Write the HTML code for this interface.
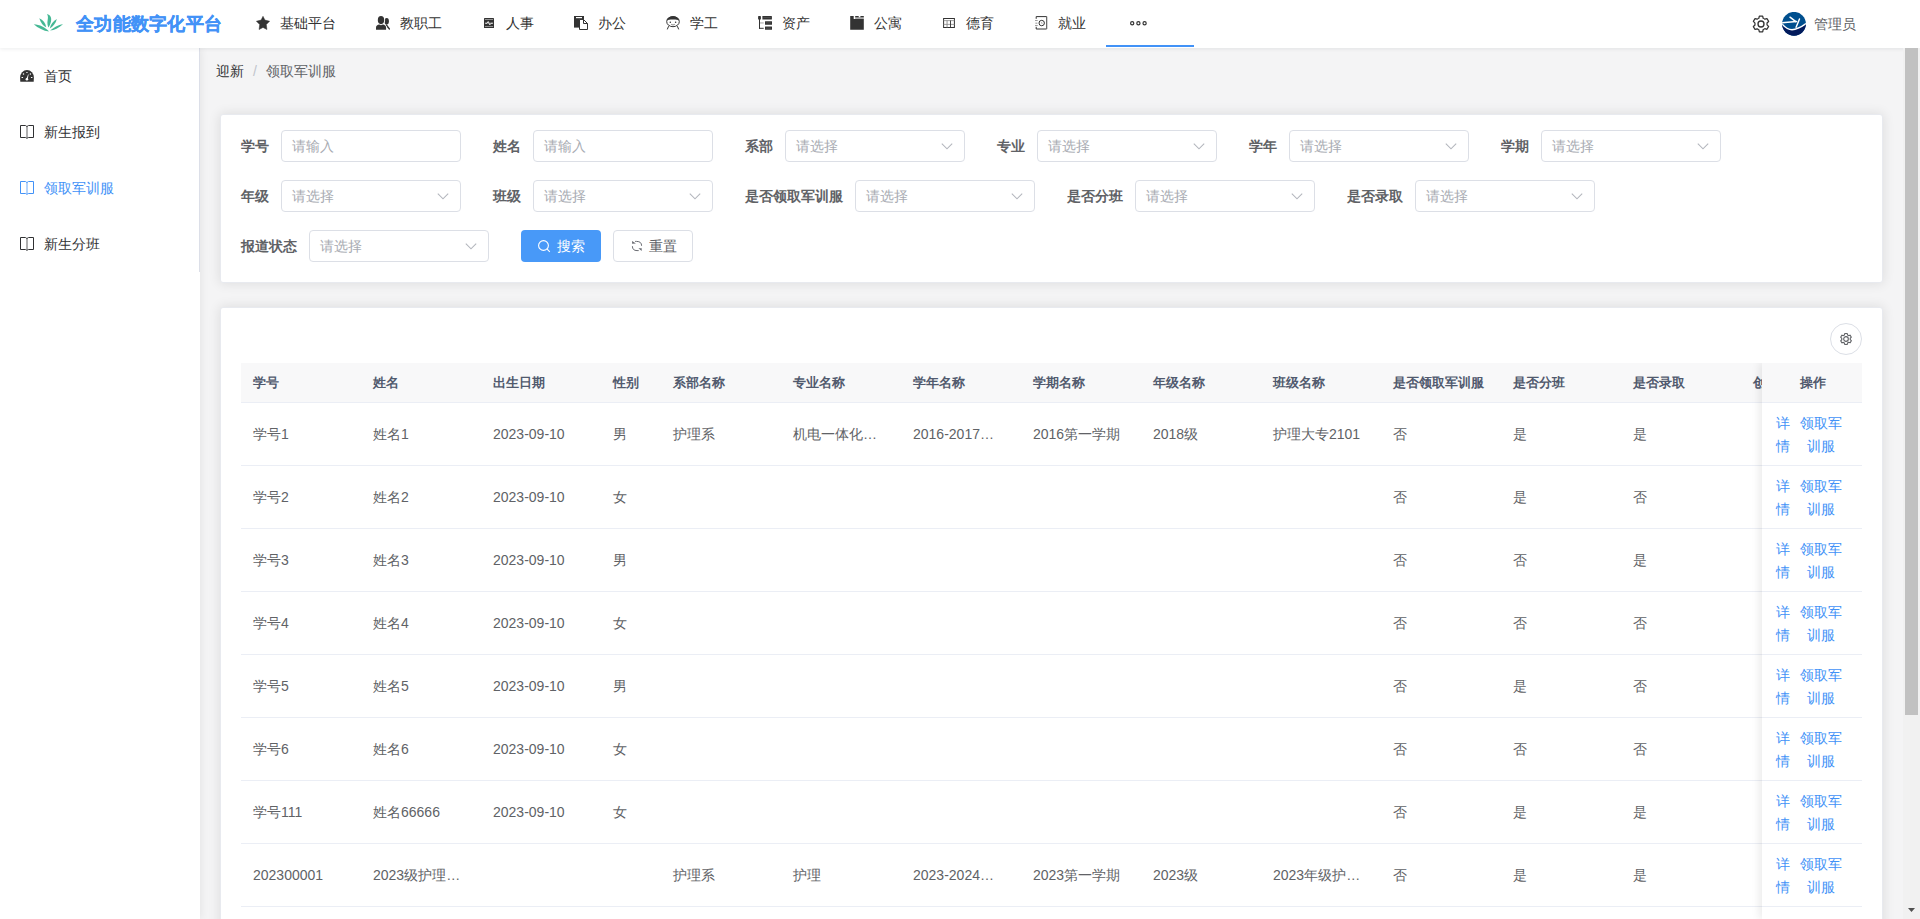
<!DOCTYPE html><html><head><meta charset="utf-8"><style>
*{box-sizing:border-box;margin:0;padding:0}
html,body{width:1920px;height:919px;overflow:hidden;background:#f4f4f5;font-family:"Liberation Sans",sans-serif;font-size:14px;color:#606266}
.abs{position:absolute}
#hdr{position:absolute;left:0;top:0;width:1920px;height:48px;background:#fff;box-shadow:0 1px 4px rgba(0,21,41,.08);z-index:5}
.ttl{position:absolute;left:76px;top:12px;font-size:18px;font-weight:900;color:#4292f7;line-height:24px;white-space:nowrap;letter-spacing:0.25px;-webkit-text-stroke:0.3px #4292f7}
.nt{position:absolute;top:-1px;line-height:48px;color:#333;white-space:nowrap}
#side{position:absolute;left:0;top:48px;width:200px;height:871px;background:#fff;z-index:2;box-shadow:1px 0 8px rgba(0,0,0,.07)}
#side .menu{position:absolute;left:0;top:0;width:200px;height:224px;border-right:1px solid #dcdfe8}
.mi{position:absolute;left:0;width:199px;height:56px;line-height:56px;color:#303133}
.mi span{position:absolute;left:44px;top:0}
.mi svg{position:absolute;left:20px;top:21px}
#sb{position:absolute;left:1903px;top:48px;width:17px;height:871px;background:#f1f1f1;z-index:6}
#thumb{position:absolute;left:2px;top:0;width:13px;height:667px;background:#c1c1c1}
.card{position:absolute;background:#fff;border-radius:3px;border:1px solid #e8eaef;box-shadow:0 0 12px 1px rgba(0,0,0,.09)}
.lbl{position:absolute;font-weight:bold;color:#606266;line-height:32px;white-space:nowrap}
.inp{position:absolute;width:180px;height:32px;border:1px solid #dcdfe6;border-radius:4px;background:#fff}
.inp span{position:absolute;left:10px;top:0;line-height:30px;color:#a8abb2;white-space:nowrap}
.inp svg{position:absolute;left:155px;top:11px}
.th{position:absolute;top:0;height:40px;line-height:40px;font-size:13px;font-weight:bold;color:#515a6e;white-space:nowrap}
.td{position:absolute;line-height:62px;white-space:nowrap;color:#606266}
.rl{position:absolute;left:0;width:1621px;height:1px;background:#ebeef5}
.op{position:absolute;color:#4292f7;line-height:23px;white-space:nowrap}
</style></head><body>
<div id="hdr">
<svg class="abs" style="left:33px;top:13px" width="31" height="20" viewBox="0 0 31 20"><g fill="#45b894">
<path d="M14 1.1 C17.5 2 18.8 5 18 8.5 C17.4 11 16.4 13 15.6 14.6 C14.6 13 14.1 10 14.6 7.5 C15.1 5 15.2 3 14 1.1Z"/>
<path d="M6.3 5.2 C10 6.8 12.6 10 13.2 14.3 C10.2 13 7.5 9.5 6.3 5.2Z"/>
<path d="M23.9 6 C20.2 8 17.6 11.5 16.8 15.5 C20.2 13.6 22.8 10 23.9 6Z"/>
<path d="M0.8 11.3 C6.5 11.5 12.5 14.5 16 18.6 C10.5 17.8 5 15.3 0.8 11.3Z"/>
<path d="M30 11.2 C25.5 15 21.5 17.2 17.1 17.6 C20.5 14.6 25.2 11.6 30 11.2Z"/>
</g></svg>
<div class="ttl">全功能数字化平台</div>
<svg class="abs" style="left:256px;top:16px" width="14" height="14" viewBox="0 0 14 14"><path fill="#333" stroke="#333" stroke-width="0.5" stroke-linejoin="round" d="M7 0.3 L8.9 4.1 L13.6 5.2 L10.3 8.5 L10.9 13.5 L7 11.4 L3.1 13.5 L3.7 8.5 L0.4 5.2 L5.1 4.1Z"/></svg>
<svg class="abs" style="left:376px;top:16px" width="14" height="14" viewBox="0 0 14 14"><g fill="#333"><ellipse cx="10.7" cy="5.2" rx="2.2" ry="3.2"/></g><path d="M10.3 9 L13.3 12.9" stroke="#333" stroke-width="1.5" stroke-linecap="round"/><ellipse cx="5" cy="4.1" rx="4.1" ry="5" fill="#fff"/><path d="M-0.5 14 V12 C-0.5 9.3 2 7.8 5 7.8 C8 7.8 11.1 9.3 11.1 12 V14Z" fill="#fff"/><g fill="#333"><ellipse cx="5" cy="4.1" rx="3.2" ry="4.1"/><path d="M0 13.8 V11.8 C0 9.8 1.5 8.7 3.3 8.6 L5 9.3 L6.8 8.6 C8.6 8.7 10.1 9.8 10.1 11.8 V13.8Z"/></g></svg>
<svg class="abs" style="left:484px;top:18px" width="10" height="10" viewBox="0 0 10 10"><rect x="0" y="0" width="10" height="10.2" rx="0.6" fill="#333"/><rect x="0.9" y="1.1" width="8.2" height="0.7" fill="#bbb"/><rect x="0.9" y="8.3" width="8.2" height="0.7" fill="#bbb"/><rect x="0.9" y="4.6" width="8.2" height="1" fill="#888"/><path d="M1.3 5.3 L3 5.3 L4.2 3.5 L5.8 6.9 L6.9 5.3 L8.8 5.3" stroke="#f4f4f4" stroke-width="0.9" fill="none"/></svg>
<svg class="abs" style="left:574px;top:16px" width="14" height="14" viewBox="0 0 14 14"><path fill="#333" d="M0 0 H10 V11.6 H0Z"/><rect x="2" y="1" width="6" height="1.2" fill="#fff"/><path d="M5.5 3.5 H9.5 L13.5 7.5 V13.5 H5.5Z" fill="#fff" stroke="#333" stroke-width="1"/><path d="M9.5 3.5 V7.5 H13.5" fill="none" stroke="#333" stroke-width="1"/></svg>
<svg class="abs" style="left:666px;top:16px" width="14" height="14" viewBox="0 0 14 14"><g fill="none" stroke="#333" stroke-width="1"><ellipse cx="7" cy="5.6" rx="6.3" ry="5.1"/><path d="M2.6 10.2 L1.3 13.4 M11.4 10.2 L12.7 13.4"/><path d="M5.2 8.3 Q7 9.8 8.8 8.3" stroke="#888"/></g><path d="M0.9 4.6 C1.2 1.6 3.6 0.5 7 0.5 C10.4 0.5 12.8 1.6 13.1 4.6 C12 3.6 10 3.4 7 3.4 C4 3.4 2 3.6 0.9 4.6Z" fill="#333"/><circle cx="4.3" cy="6.3" r="0.75" fill="#333"/><circle cx="9.6" cy="6.3" r="0.75" fill="#333"/></svg>
<svg class="abs" style="left:758px;top:16px" width="14" height="14" viewBox="0 0 14 14"><g fill="#333"><rect x="0.1" y="0.1" width="2.8" height="3.4" rx="0.6"/><rect x="1" y="3" width="1" height="9.8"/><rect x="1" y="11.8" width="4.7" height="1"/><rect x="4.4" y="0.1" width="9.5" height="3.4" rx="0.3"/><rect x="7" y="5.3" width="7" height="3.4" rx="0.3"/><rect x="7" y="10.4" width="7" height="3.4" rx="0.3"/></g><rect x="2" y="6.5" width="3.7" height="0.9" fill="#999"/><rect x="5.4" y="1.5" width="7.5" height="0.5" fill="#666"/><rect x="8" y="6.7" width="5" height="0.5" fill="#666"/><rect x="8" y="11.8" width="5" height="0.5" fill="#666"/></svg>
<svg class="abs" style="left:850px;top:16px" width="14" height="14" viewBox="0 0 14 14"><rect x="5.2" y="1.1" width="8.6" height="2.2" fill="#a8a8a8"/><path fill="#333" d="M0.2 0.1 H3.7 V3.1 H13.8 V13.8 H0.2Z"/><path fill="#333" d="M5.2 0.1 H8.7 V1.2 H5.2Z M10.4 0.1 H13.8 V1.2 H10.4Z"/></svg>
<svg class="abs" style="left:943px;top:18px" width="12" height="10" viewBox="0 0 12 10"><rect x="0.6" y="0.5" width="10.8" height="9" fill="none" stroke="#333" stroke-width="1"/><rect x="0.6" y="2.3" width="10.8" height="0.8" fill="#888"/><rect x="0.6" y="5.9" width="10.8" height="0.8" fill="#888"/><rect x="3.6" y="2.5" width="0.9" height="7" fill="#888"/><rect x="7" y="2.5" width="0.9" height="7" fill="#333"/></svg>
<svg class="abs" style="left:1035px;top:16px" width="13" height="14" viewBox="0 0 13 14"><path d="M1.2 2.8 V0.6 H11.6 V13 H1.2 V10.8" fill="none" stroke="#333" stroke-width="1"/><rect x="11.2" y="0.6" width="1" height="12.4" fill="#777"/><circle cx="6.7" cy="7.05" r="2.7" fill="none" stroke="#333" stroke-width="1"/><g fill="#888"><rect x="0" y="4" width="2.7" height="0.8"/><rect x="0.4" y="6.7" width="2" height="0.9"/><rect x="0" y="9.1" width="2.7" height="0.8"/><path d="M6.3 5.8 L7.9 7.4 L6.3 7.4Z"/></g></svg>
<div class="nt" style="left:280px">基础平台</div>
<div class="nt" style="left:400px">教职工</div>
<div class="nt" style="left:506px">人事</div>
<div class="nt" style="left:598px">办公</div>
<div class="nt" style="left:690px">学工</div>
<div class="nt" style="left:782px">资产</div>
<div class="nt" style="left:874px">公寓</div>
<div class="nt" style="left:966px">德育</div>
<div class="nt" style="left:1058px">就业</div>
<svg class="abs" style="left:1130px;top:21px" width="17" height="5" viewBox="0 0 17 5"><g fill="none" stroke="#333" stroke-width="1.2"><circle cx="2.2" cy="2.3" r="1.6"/><circle cx="8.4" cy="2.3" r="1.6"/><circle cx="14.6" cy="2.3" r="1.6"/></g></svg>
<div class="abs" style="left:1106px;top:45px;width:88px;height:2px;background:#4292f7"></div>
<svg class="abs" style="left:1751px;top:14px" width="20" height="20" viewBox="0 0 24 24"><path fill="none" stroke="#333" stroke-width="1.5" stroke-linejoin="round" d="M10 2.5 h4 l0.6 2.6 a7.5 7.5 0 0 1 2 1.15 l2.55-0.8 2 3.46 -1.95 1.84 a7.5 7.5 0 0 1 0 2.3 l1.95 1.84 -2 3.46 -2.55-0.8 a7.5 7.5 0 0 1 -2 1.15 L14 21.5 h-4 l-0.6-2.6 a7.5 7.5 0 0 1 -2-1.15 l-2.55 0.8 -2-3.46 1.95-1.84 a7.5 7.5 0 0 1 0-2.3 L2.85 8.91 l2-3.46 2.55 0.8 a7.5 7.5 0 0 1 2-1.15Z"/><circle cx="12" cy="12" r="3.6" fill="none" stroke="#333" stroke-width="1.6"/></svg>
<svg class="abs" style="left:1782px;top:12px" width="24" height="24" viewBox="0 0 24 24"><defs><clipPath id="cc"><circle cx="12" cy="11.8" r="11.9"/></clipPath></defs><g clip-path="url(#cc)"><rect width="24" height="24" fill="#004f8e"/><path d="M0 12.2 Q5 17.6 10 17.7 Q16 17.5 24 11.6 V24 H0Z" fill="#021a5c"/><g stroke="#fff" stroke-width="1.5" fill="none" stroke-linecap="round"><path d="M-1 10.8 L14.5 9.4"/><path d="M8 5.2 L13.8 9.6"/><path d="M17.5 7 L14.1 15.2"/><path d="M0.2 12.2 Q5 17.6 10 17.7 Q16 17.5 24 11.6"/></g></g></svg>
<div class="abs" style="left:1814px;top:0;line-height:48px;color:#606266;white-space:nowrap">管理员</div>
</div>
<div id="side"><div class="menu">
<div class="mi" style="top:0px;color:#303133"><svg width="14" height="12" viewBox="0 0 14 12" style="top:22px"><path fill="#333" d="M0.3 11.7 L0.1 7.6 A6.9 7.6 0 0 1 13.9 7.6 L13.7 11.7Z"/><g fill="#fff"><rect x="6.2" y="2" width="1.5" height="0.9" rx="0.4"/><circle cx="3.5" cy="3.9" r="0.75"/><circle cx="10.4" cy="3.9" r="0.75"/><rect x="1.4" y="7.1" width="1.8" height="0.9" rx="0.4"/><rect x="10.8" y="7.1" width="1.8" height="0.9" rx="0.4"/><circle cx="6.9" cy="9.2" r="1.3"/><path d="M6.3 9 L8.2 4.3 L8.6 4.5 L7.6 9.4Z"/></g></svg><span>首页</span></div>
<div class="mi" style="top:56px;color:#303133"><svg width="14" height="14" viewBox="0 0 14 14" style="top:21px"><path d="M5.6 0.5 H0.5 V12.5 H5.6 M8.4 0.5 H13.5 V12.5 H8.4" fill="none" stroke="#303133" stroke-width="1"/><rect x="6.3" y="1.5" width="1.4" height="11.2" fill="#303133" opacity="0.55"/><path d="M5.6 0.5 L6.9 1.6 L8.4 0.5 M5.6 12.5 L6.9 13.3 L8.4 12.5" fill="none" stroke="#303133" stroke-width="1"/></svg><span>新生报到</span></div>
<div class="mi" style="top:112px;color:#4292f7"><svg width="14" height="14" viewBox="0 0 14 14" style="top:21px"><path d="M5.6 0.5 H0.5 V12.5 H5.6 M8.4 0.5 H13.5 V12.5 H8.4" fill="none" stroke="#4292f7" stroke-width="1"/><rect x="6.3" y="1.5" width="1.4" height="11.2" fill="#4292f7" opacity="0.55"/><path d="M5.6 0.5 L6.9 1.6 L8.4 0.5 M5.6 12.5 L6.9 13.3 L8.4 12.5" fill="none" stroke="#4292f7" stroke-width="1"/></svg><span>领取军训服</span></div>
<div class="mi" style="top:168px;color:#303133"><svg width="14" height="14" viewBox="0 0 14 14" style="top:21px"><path d="M5.6 0.5 H0.5 V12.5 H5.6 M8.4 0.5 H13.5 V12.5 H8.4" fill="none" stroke="#303133" stroke-width="1"/><rect x="6.3" y="1.5" width="1.4" height="11.2" fill="#303133" opacity="0.55"/><path d="M5.6 0.5 L6.9 1.6 L8.4 0.5 M5.6 12.5 L6.9 13.3 L8.4 12.5" fill="none" stroke="#303133" stroke-width="1"/></svg><span>新生分班</span></div>
</div></div>
<div class="abs" style="left:216px;top:60px;line-height:22px;white-space:nowrap"><span style="color:#303133">迎新</span><span style="color:#c0c4cc;margin:0 9px">/</span><span style="color:#606266">领取军训服</span></div>
<div class="card" style="left:220px;top:114px;width:1663px;height:169px"></div>
<div class="lbl" style="left:241px;top:130px">学号</div>
<div class="inp" style="left:281px;top:130px"><span>请输入</span></div>
<div class="lbl" style="left:493px;top:130px">姓名</div>
<div class="inp" style="left:533px;top:130px"><span>请输入</span></div>
<div class="lbl" style="left:745px;top:130px">系部</div>
<div class="inp" style="left:785px;top:130px"><span>请选择</span><svg width="12" height="7" viewBox="0 0 12 7" style="left:155px;top:12px"><path d="M0.8 0.6 L6 5.8 L11.2 0.6" fill="none" stroke="#b4b7be" stroke-width="1.1"/></svg></div>
<div class="lbl" style="left:997px;top:130px">专业</div>
<div class="inp" style="left:1037px;top:130px"><span>请选择</span><svg width="12" height="7" viewBox="0 0 12 7" style="left:155px;top:12px"><path d="M0.8 0.6 L6 5.8 L11.2 0.6" fill="none" stroke="#b4b7be" stroke-width="1.1"/></svg></div>
<div class="lbl" style="left:1249px;top:130px">学年</div>
<div class="inp" style="left:1289px;top:130px"><span>请选择</span><svg width="12" height="7" viewBox="0 0 12 7" style="left:155px;top:12px"><path d="M0.8 0.6 L6 5.8 L11.2 0.6" fill="none" stroke="#b4b7be" stroke-width="1.1"/></svg></div>
<div class="lbl" style="left:1501px;top:130px">学期</div>
<div class="inp" style="left:1541px;top:130px"><span>请选择</span><svg width="12" height="7" viewBox="0 0 12 7" style="left:155px;top:12px"><path d="M0.8 0.6 L6 5.8 L11.2 0.6" fill="none" stroke="#b4b7be" stroke-width="1.1"/></svg></div>
<div class="lbl" style="left:241px;top:180px">年级</div>
<div class="inp" style="left:281px;top:180px"><span>请选择</span><svg width="12" height="7" viewBox="0 0 12 7" style="left:155px;top:12px"><path d="M0.8 0.6 L6 5.8 L11.2 0.6" fill="none" stroke="#b4b7be" stroke-width="1.1"/></svg></div>
<div class="lbl" style="left:493px;top:180px">班级</div>
<div class="inp" style="left:533px;top:180px"><span>请选择</span><svg width="12" height="7" viewBox="0 0 12 7" style="left:155px;top:12px"><path d="M0.8 0.6 L6 5.8 L11.2 0.6" fill="none" stroke="#b4b7be" stroke-width="1.1"/></svg></div>
<div class="lbl" style="left:745px;top:180px">是否领取军训服</div>
<div class="inp" style="left:855px;top:180px"><span>请选择</span><svg width="12" height="7" viewBox="0 0 12 7" style="left:155px;top:12px"><path d="M0.8 0.6 L6 5.8 L11.2 0.6" fill="none" stroke="#b4b7be" stroke-width="1.1"/></svg></div>
<div class="lbl" style="left:1067px;top:180px">是否分班</div>
<div class="inp" style="left:1135px;top:180px"><span>请选择</span><svg width="12" height="7" viewBox="0 0 12 7" style="left:155px;top:12px"><path d="M0.8 0.6 L6 5.8 L11.2 0.6" fill="none" stroke="#b4b7be" stroke-width="1.1"/></svg></div>
<div class="lbl" style="left:1347px;top:180px">是否录取</div>
<div class="inp" style="left:1415px;top:180px"><span>请选择</span><svg width="12" height="7" viewBox="0 0 12 7" style="left:155px;top:12px"><path d="M0.8 0.6 L6 5.8 L11.2 0.6" fill="none" stroke="#b4b7be" stroke-width="1.1"/></svg></div>
<div class="lbl" style="left:241px;top:230px">报道状态</div>
<div class="inp" style="left:309px;top:230px"><span>请选择</span><svg width="12" height="7" viewBox="0 0 12 7" style="left:155px;top:12px"><path d="M0.8 0.6 L6 5.8 L11.2 0.6" fill="none" stroke="#b4b7be" stroke-width="1.1"/></svg></div>
<div class="abs" style="left:521px;top:230px;width:80px;height:32px;background:#4899f8;border-radius:4px"><svg class="abs" style="left:17px;top:10px" width="13" height="13" viewBox="0 0 13 13"><circle cx="5.5" cy="5.5" r="4.9" fill="none" stroke="#fff" stroke-width="1.1"/><path d="M9.2 9.2 L11.8 11.8" stroke="#fff" stroke-width="1.1"/></svg><span class="abs" style="left:36px;top:0;line-height:32px;color:#fff">搜索</span></div>
<div class="abs" style="left:613px;top:230px;width:80px;height:32px;background:#fff;border:1px solid #dcdfe6;border-radius:4px"><svg class="abs" style="left:17px;top:9px" width="12" height="12" viewBox="0 0 12 12"><path d="M4.1 1.4 H5.6 Q10.6 1.4 10.6 5.8 M1.4 6.2 Q1.4 10.6 6 10.6 H7.7" fill="none" stroke="#6a6c72" stroke-width="1"/><path d="M1.1 0.9 V3.8 L4.9 3.5Z M7.4 8.2 H10.7 V10.9Z" fill="#6a6c72"/></svg><span class="abs" style="left:35px;top:-1px;line-height:32px;color:#606266">重置</span></div>
<div class="card" style="left:220px;top:307px;width:1663px;height:640px"></div>
<div class="abs" style="left:1830px;top:323px;width:32px;height:32px;border:1px solid #dcdfe6;border-radius:50%;background:#fff"><svg class="abs" style="left:8px;top:8px" width="14" height="14" viewBox="0 0 24 24"><path fill="none" stroke="#606266" stroke-width="1.9" stroke-linejoin="round" d="M10 2.5 h4 l0.6 2.6 a7.5 7.5 0 0 1 2 1.15 l2.55-0.8 2 3.46 -1.95 1.84 a7.5 7.5 0 0 1 0 2.3 l1.95 1.84 -2 3.46 -2.55-0.8 a7.5 7.5 0 0 1 -2 1.15 L14 21.5 h-4 l-0.6-2.6 a7.5 7.5 0 0 1 -2-1.15 l-2.55 0.8 -2-3.46 1.95-1.84 a7.5 7.5 0 0 1 0-2.3 L2.85 8.91 l2-3.46 2.55 0.8 a7.5 7.5 0 0 1 2-1.15Z"/><circle cx="12" cy="12" r="4" fill="none" stroke="#606266" stroke-width="1.9"/></svg></div>
<div class="abs" style="left:241px;top:363px;width:1621px;height:556px;overflow:hidden">
<div class="abs" style="left:0;top:0;width:1621px;height:40px;background:#f8f8f9"></div>
<div class="th" style="left:12px">学号</div>
<div class="th" style="left:132px">姓名</div>
<div class="th" style="left:252px">出生日期</div>
<div class="th" style="left:372px">性别</div>
<div class="th" style="left:432px">系部名称</div>
<div class="th" style="left:552px">专业名称</div>
<div class="th" style="left:672px">学年名称</div>
<div class="th" style="left:792px">学期名称</div>
<div class="th" style="left:912px">年级名称</div>
<div class="th" style="left:1032px">班级名称</div>
<div class="th" style="left:1152px">是否领取军训服</div>
<div class="th" style="left:1272px">是否分班</div>
<div class="th" style="left:1392px">是否录取</div>
<div class="th" style="left:1512px">创建时间</div>
<div class="rl" style="top:39px"></div>
<div class="td" style="left:12px;top:40px">学号1</div>
<div class="td" style="left:132px;top:40px">姓名1</div>
<div class="td" style="left:252px;top:40px">2023-09-10</div>
<div class="td" style="left:372px;top:40px">男</div>
<div class="td" style="left:432px;top:40px">护理系</div>
<div class="td" style="left:552px;top:40px">机电一体化…</div>
<div class="td" style="left:672px;top:40px">2016-2017…</div>
<div class="td" style="left:792px;top:40px">2016第一学期</div>
<div class="td" style="left:912px;top:40px">2018级</div>
<div class="td" style="left:1032px;top:40px">护理大专2101</div>
<div class="td" style="left:1152px;top:40px">否</div>
<div class="td" style="left:1272px;top:40px">是</div>
<div class="td" style="left:1392px;top:40px">是</div>
<div class="rl" style="top:102px"></div>
<div class="td" style="left:12px;top:103px">学号2</div>
<div class="td" style="left:132px;top:103px">姓名2</div>
<div class="td" style="left:252px;top:103px">2023-09-10</div>
<div class="td" style="left:372px;top:103px">女</div>
<div class="td" style="left:1152px;top:103px">否</div>
<div class="td" style="left:1272px;top:103px">是</div>
<div class="td" style="left:1392px;top:103px">否</div>
<div class="rl" style="top:165px"></div>
<div class="td" style="left:12px;top:166px">学号3</div>
<div class="td" style="left:132px;top:166px">姓名3</div>
<div class="td" style="left:252px;top:166px">2023-09-10</div>
<div class="td" style="left:372px;top:166px">男</div>
<div class="td" style="left:1152px;top:166px">否</div>
<div class="td" style="left:1272px;top:166px">否</div>
<div class="td" style="left:1392px;top:166px">是</div>
<div class="rl" style="top:228px"></div>
<div class="td" style="left:12px;top:229px">学号4</div>
<div class="td" style="left:132px;top:229px">姓名4</div>
<div class="td" style="left:252px;top:229px">2023-09-10</div>
<div class="td" style="left:372px;top:229px">女</div>
<div class="td" style="left:1152px;top:229px">否</div>
<div class="td" style="left:1272px;top:229px">否</div>
<div class="td" style="left:1392px;top:229px">否</div>
<div class="rl" style="top:291px"></div>
<div class="td" style="left:12px;top:292px">学号5</div>
<div class="td" style="left:132px;top:292px">姓名5</div>
<div class="td" style="left:252px;top:292px">2023-09-10</div>
<div class="td" style="left:372px;top:292px">男</div>
<div class="td" style="left:1152px;top:292px">否</div>
<div class="td" style="left:1272px;top:292px">是</div>
<div class="td" style="left:1392px;top:292px">否</div>
<div class="rl" style="top:354px"></div>
<div class="td" style="left:12px;top:355px">学号6</div>
<div class="td" style="left:132px;top:355px">姓名6</div>
<div class="td" style="left:252px;top:355px">2023-09-10</div>
<div class="td" style="left:372px;top:355px">女</div>
<div class="td" style="left:1152px;top:355px">否</div>
<div class="td" style="left:1272px;top:355px">否</div>
<div class="td" style="left:1392px;top:355px">否</div>
<div class="rl" style="top:417px"></div>
<div class="td" style="left:12px;top:418px">学号111</div>
<div class="td" style="left:132px;top:418px">姓名66666</div>
<div class="td" style="left:252px;top:418px">2023-09-10</div>
<div class="td" style="left:372px;top:418px">女</div>
<div class="td" style="left:1152px;top:418px">否</div>
<div class="td" style="left:1272px;top:418px">是</div>
<div class="td" style="left:1392px;top:418px">是</div>
<div class="rl" style="top:480px"></div>
<div class="td" style="left:12px;top:481px">202300001</div>
<div class="td" style="left:132px;top:481px">2023级护理…</div>
<div class="td" style="left:432px;top:481px">护理系</div>
<div class="td" style="left:552px;top:481px">护理</div>
<div class="td" style="left:672px;top:481px">2023-2024…</div>
<div class="td" style="left:792px;top:481px">2023第一学期</div>
<div class="td" style="left:912px;top:481px">2023级</div>
<div class="td" style="left:1032px;top:481px">2023年级护…</div>
<div class="td" style="left:1152px;top:481px">否</div>
<div class="td" style="left:1272px;top:481px">是</div>
<div class="td" style="left:1392px;top:481px">是</div>
<div class="rl" style="top:543px"></div>
<div class="abs" style="left:1521px;top:0;width:100px;height:556px;background:#fff;box-shadow:-3px 0 8px rgba(0,0,0,.08)">
<div class="abs" style="left:0;top:0;width:100px;height:40px;background:#f8f8f9"></div>
<div class="th" style="left:38px">操作</div>
<div class="rl" style="top:39px;width:100px"></div>
<div class="op" style="left:14px;top:49px">详<br>情</div>
<div class="op" style="left:38px;top:49px;text-align:center;width:42px">领取军<br>训服</div>
<div class="rl" style="top:102px;width:100px"></div>
<div class="op" style="left:14px;top:112px">详<br>情</div>
<div class="op" style="left:38px;top:112px;text-align:center;width:42px">领取军<br>训服</div>
<div class="rl" style="top:165px;width:100px"></div>
<div class="op" style="left:14px;top:175px">详<br>情</div>
<div class="op" style="left:38px;top:175px;text-align:center;width:42px">领取军<br>训服</div>
<div class="rl" style="top:228px;width:100px"></div>
<div class="op" style="left:14px;top:238px">详<br>情</div>
<div class="op" style="left:38px;top:238px;text-align:center;width:42px">领取军<br>训服</div>
<div class="rl" style="top:291px;width:100px"></div>
<div class="op" style="left:14px;top:301px">详<br>情</div>
<div class="op" style="left:38px;top:301px;text-align:center;width:42px">领取军<br>训服</div>
<div class="rl" style="top:354px;width:100px"></div>
<div class="op" style="left:14px;top:364px">详<br>情</div>
<div class="op" style="left:38px;top:364px;text-align:center;width:42px">领取军<br>训服</div>
<div class="rl" style="top:417px;width:100px"></div>
<div class="op" style="left:14px;top:427px">详<br>情</div>
<div class="op" style="left:38px;top:427px;text-align:center;width:42px">领取军<br>训服</div>
<div class="rl" style="top:480px;width:100px"></div>
<div class="op" style="left:14px;top:490px">详<br>情</div>
<div class="op" style="left:38px;top:490px;text-align:center;width:42px">领取军<br>训服</div>
<div class="rl" style="top:543px;width:100px"></div>
</div>
</div>
<div id="sb"><div id="thumb"></div><svg class="abs" style="left:5px;top:860px" width="7" height="4" viewBox="0 0 7 4"><path d="M0 0 H7 L3.5 4Z" fill="#505050"/></svg></div>
</body></html>
